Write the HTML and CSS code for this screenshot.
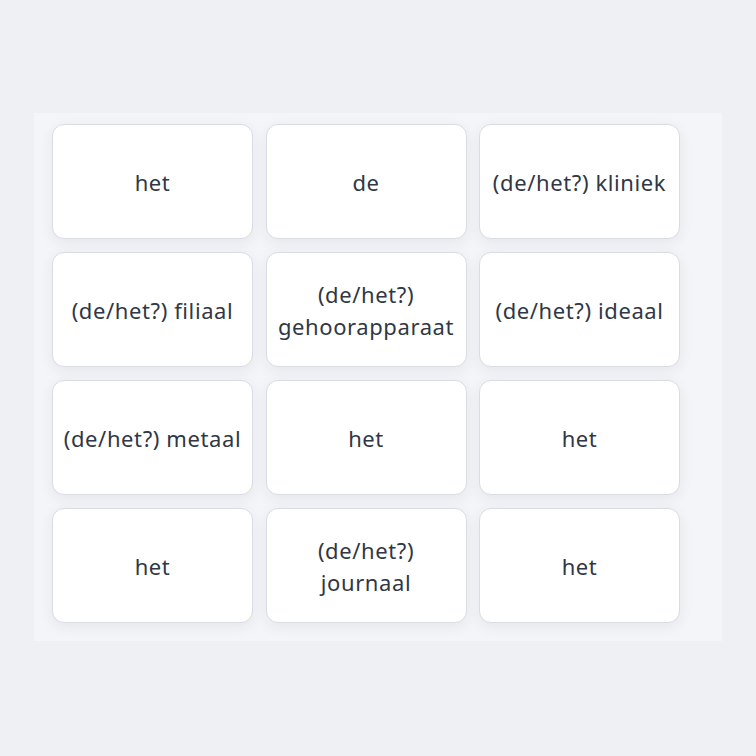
FILE: index.html
```html
<!DOCTYPE html>
<html lang="nl">
<head>
  <meta charset="UTF-8">
  <meta name="viewport" content="width=device-width, initial-scale=1.0">
  <title>Lidwoorden</title>
  <link rel="stylesheet" href="styles.css">
</head>

<body>
  <div class="board">
    <div class="grid">
      <div class="card">het</div>
      <div class="card">de</div>
      <div class="card">(de/het?) kliniek</div>
      <div class="card">(de/het?) filiaal</div>
      <div class="card">(de/het?) gehoorapparaat</div>
      <div class="card">(de/het?) ideaal</div>
      <div class="card">(de/het?) metaal</div>
      <div class="card">het</div>
      <div class="card">het</div>
      <div class="card">het</div>
      <div class="card">(de/het?) journaal</div>
      <div class="card">het</div>
    </div>
  </div>
</body>

</html>
```

FILE: styles.css
```css
body {
  margin: 0;
  height: 756px;
  background-color: #eff0f4;
  font-family: "Noto Sans", sans-serif;
}

.board {
  position: relative;
  top: 113px;
  left: 34px;
  width: 688px;
  height: 528px;
  box-sizing: border-box;
  padding: 11px 42px 19px 18px;
  background-color: #f4f5f8;
}

.grid {
  display: grid;
  grid-template-columns: repeat(3, 201px);
  grid-auto-rows: 115px;
  column-gap: 12.5px;
  row-gap: 13px;
}

.card {
  display: flex;
  justify-content: center;
  align-items: center;
  text-align: center;
  padding: 0 8px;
  background-color: #fff;
  border: 1px solid #d9dce4;
  border-radius: 12px;
  box-shadow: 0 4px 14px rgba(30, 40, 70, 0.07);
  font-size: 22px;
  letter-spacing: 0.6px;
  line-height: 32px;
  color: #313744;
}
```
